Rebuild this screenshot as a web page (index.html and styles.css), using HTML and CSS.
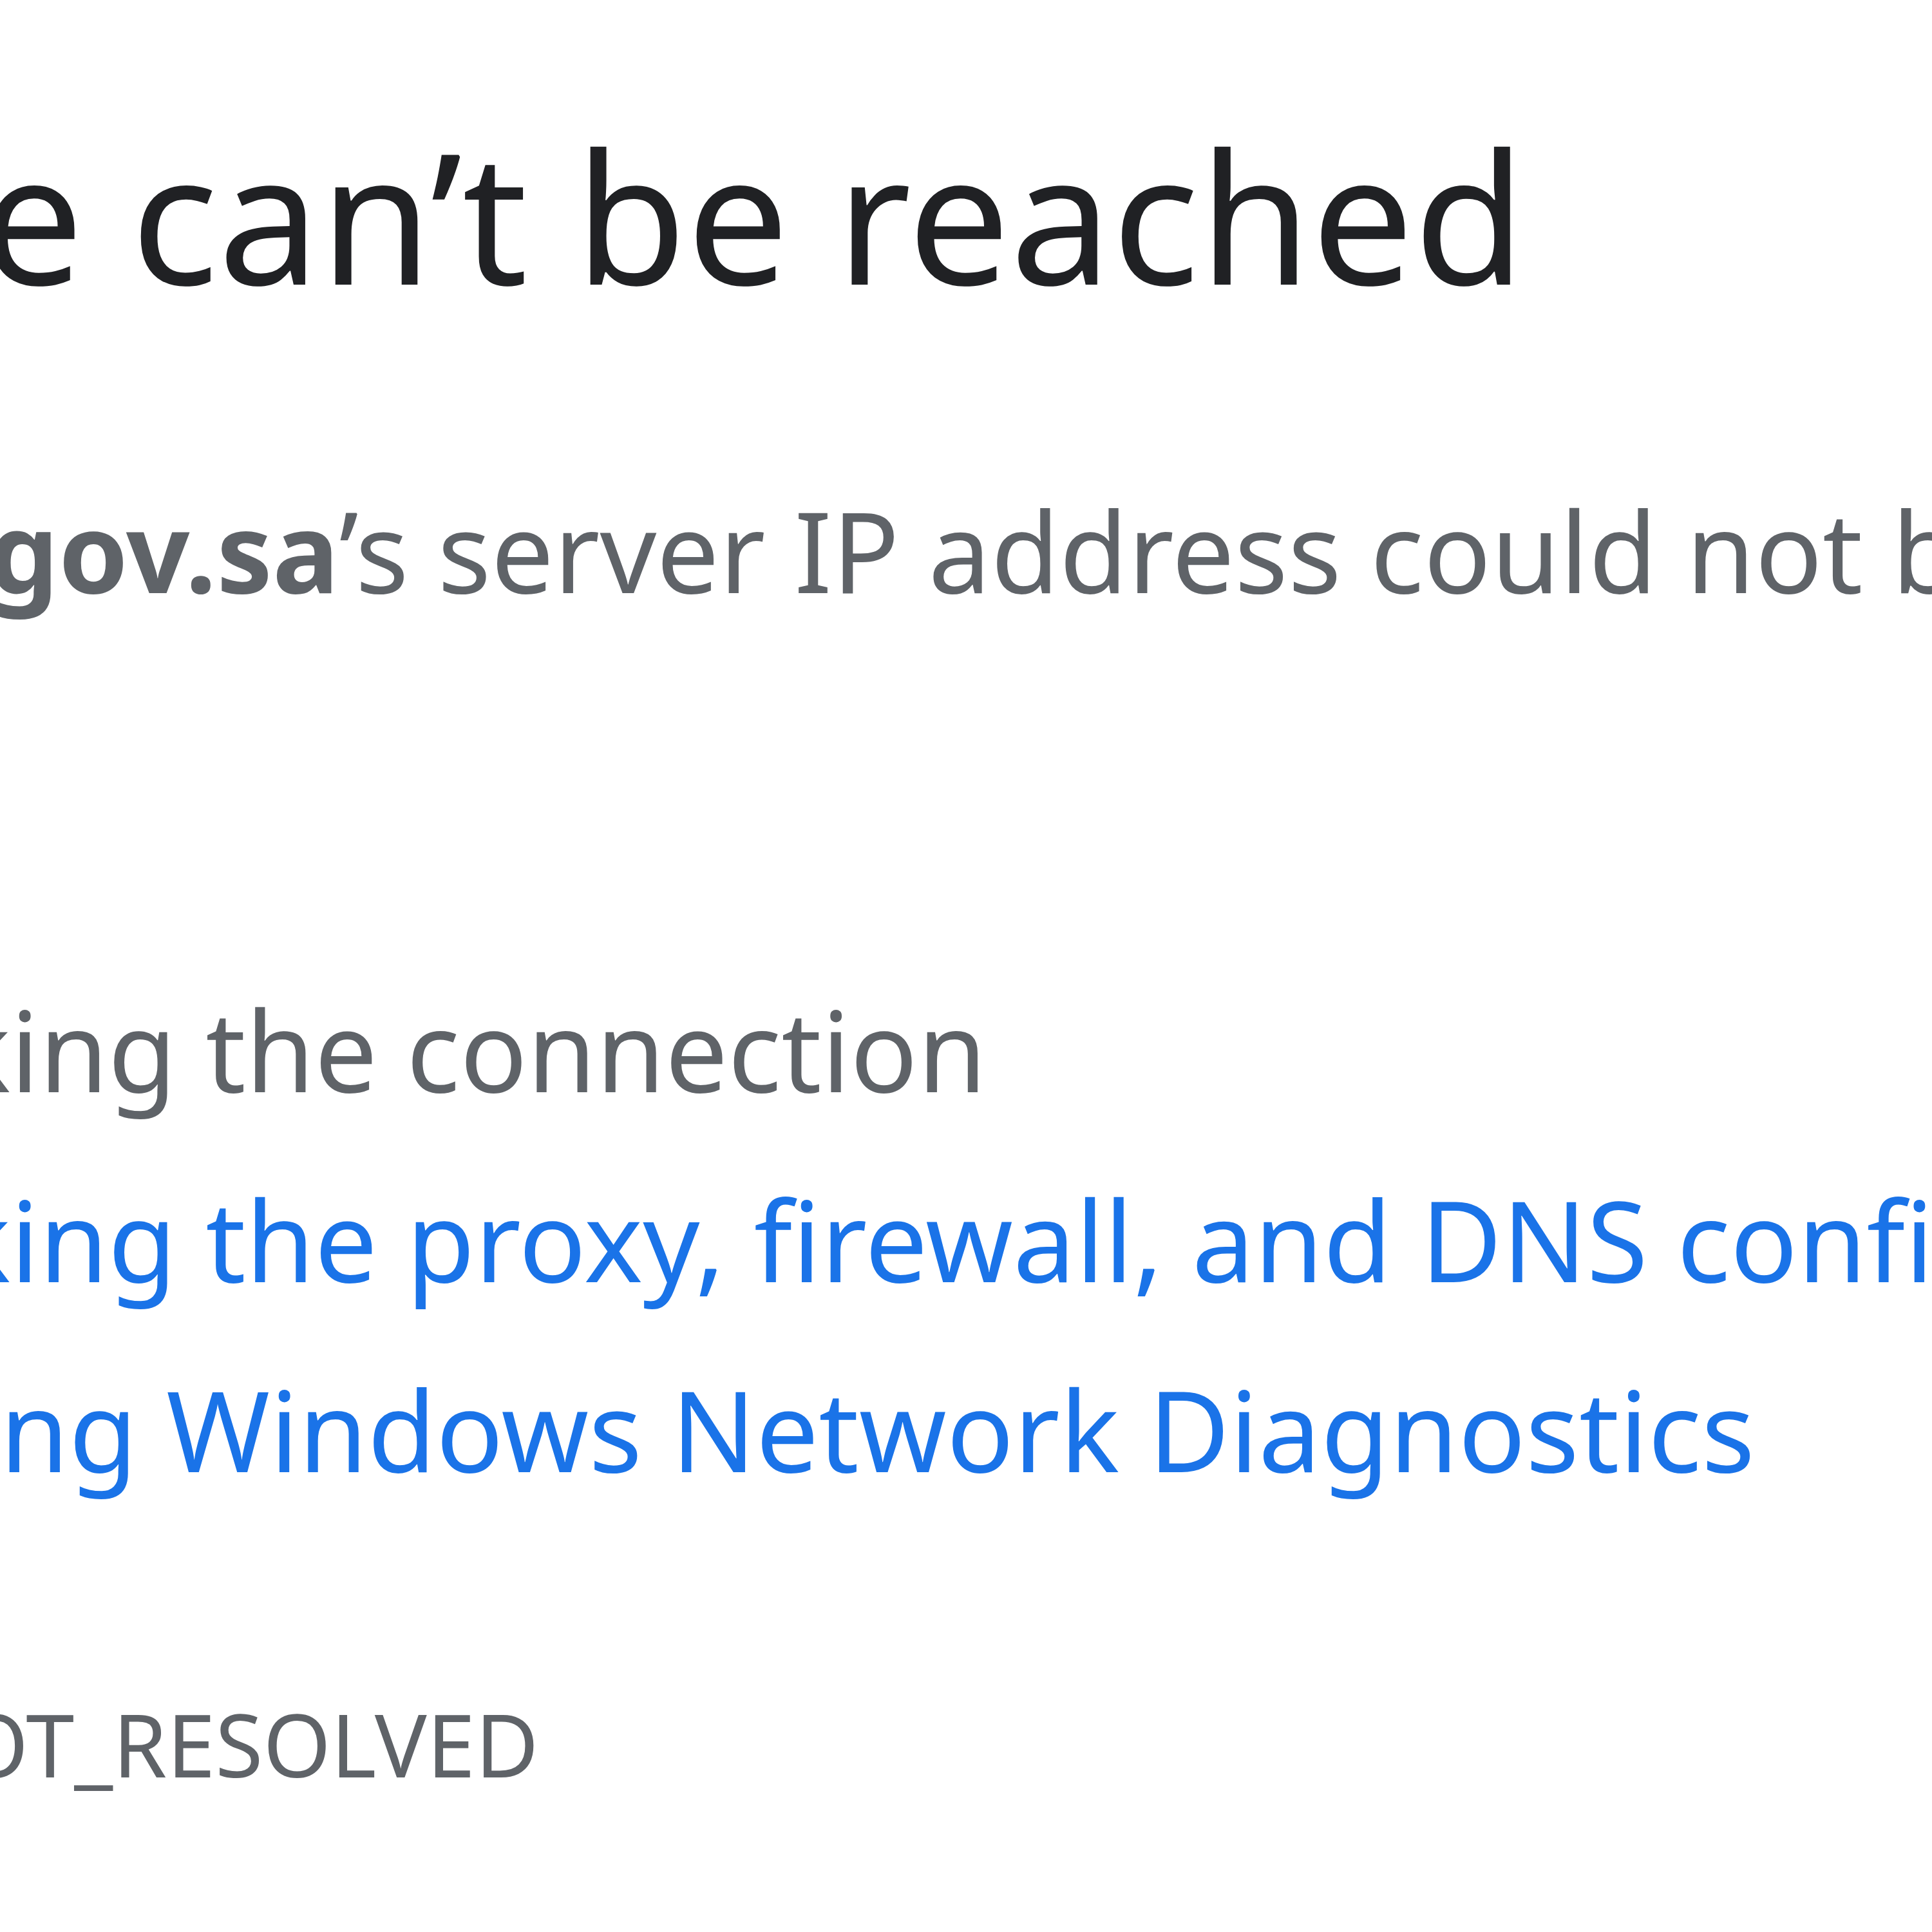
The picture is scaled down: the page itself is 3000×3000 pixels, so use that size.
FILE: index.html
```html
<!DOCTYPE html>
<html>
<head>
<meta charset="utf-8">
<link rel="stylesheet" href="styles.css">
</head>
<body>
<div class="page">
  <div class="content">
    <h1 class="title">This site <span class="w">can’t</span> be <span class="w">reached</span></h1>
    <p class="summary"><strong>www.moe.<span class="w">gov.sa</span></strong>’s <span class="w">server</span> IP address <span class="w">could</span> not <span class="w">be</span> found.</p>
    <p class="try">Try:</p>
    <ul class="suggestions">
      <li>Checking <span class="w">the</span> <span class="w">connection</span></li>
      <li><a class="link">Checking the <span class="w">proxy</span>, firewall, and <span class="w">DNS</span> configuration</a></li>
      <li><a class="link">Running <span class="w">Windows</span> Network <span class="w">Diagnostics</span></a></li>
    </ul>
    <div class="code">ERR_NAME_NOT_<span class="w">RESOLVED</span></div>
  </div>
</div>
<div class="status" id="status"></div>
<script src="script.js"></script>
</body>
</html>
```

FILE: styles.css
```css
html, body {
  margin: 0;
  padding: 0;
  background: #ffffff;
}
body {
  font-family: "Noto Sans", "Open Sans", sans-serif;
  width: 3000px;
  height: 3000px;
  overflow: hidden;
  position: relative;
}
.page {
  padding-top: 157px;
}
.content {
  margin-left: -951px;
  font-size: 173px;
  color: #5f6368;
}
.title {
  font-size: 282px;
  font-weight: 400;
  color: #202124;
  margin: 0;
  line-height: 353px;
  white-space: nowrap;
}
.summary {
  margin: 206px 0 0;
  padding-left: 18px;
  line-height: 277px;
  white-space: nowrap;
}
.summary strong {
  font-weight: 700;
}
.try {
  margin: 106px 0;
  line-height: 277px;
}
.suggestions {
  margin: 0;
  padding-left: 478px;
  list-style: none;
}
.suggestions li {
  line-height: 295px;
  white-space: nowrap;
}
.link {
  color: #1a73e8;
  text-decoration: none;
}
.code {
  margin-top: 241px;
  padding-left: 38px;
  font-size: 135px;
  line-height: 200px;
  white-space: nowrap;
}
.status {
  position: absolute;
  left: 0;
  top: 2850px;
  width: 3000px;
  height: 0;
}
```

FILE: script.js
```js
document.fonts.ready.then(function () {
  document.getElementById("status").setAttribute("data-ready", "1");
  document.body.classList.add("fonts-ready");
});
```
